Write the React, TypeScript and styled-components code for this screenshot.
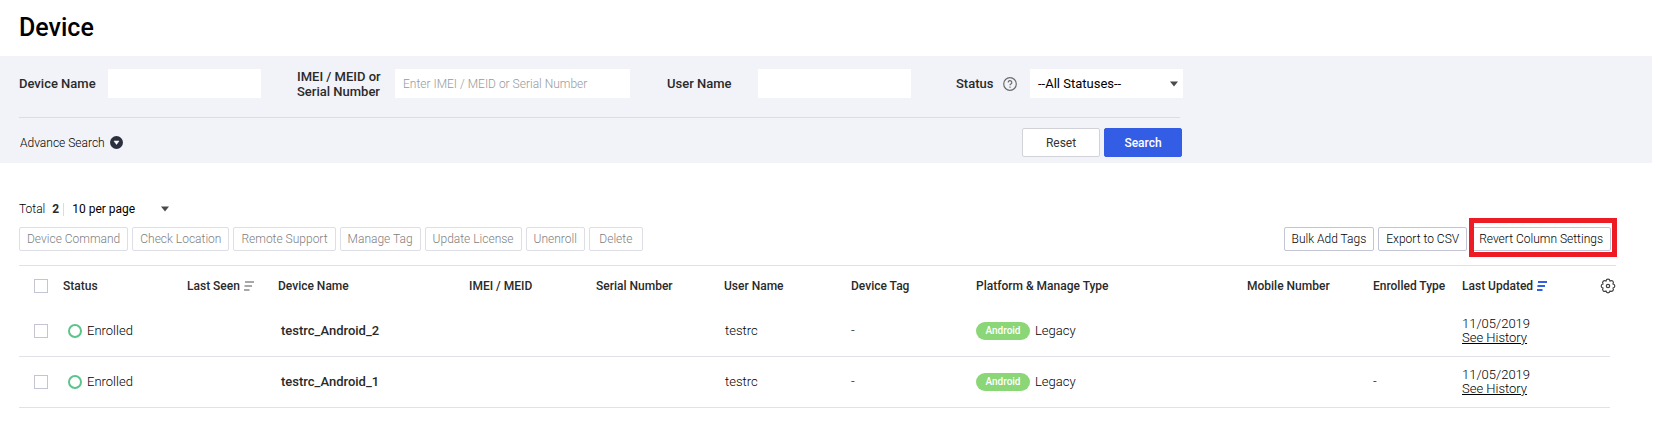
import React from 'react';
import styled, { createGlobalStyle, css } from 'styled-components';

const Global = createGlobalStyle`
  * { box-sizing: border-box; }
  body {
    margin: 0;
    background: #fff;
    color: #000;
    font-family: Roboto, "Liberation Sans", sans-serif;
    font-size: 12px;
    font-weight: 300;
    line-height: 14px;
  }
  button, input, select { font: inherit; color: inherit; margin: 0; }
`;

const Title = styled.h1`
  margin: 0;
  padding: 12px 19px 12px;
  font-size: 25px;
  font-weight: 500;
  line-height: 32px;
`;

const SearchPanel = styled.section`
  margin-right: 7px;
  padding: 13px 19px 6px;
  background: #f2f3f8;
`;

const SearchForm = styled.form`
  max-width: 1164px;
`;

const Fields = styled.div`
  display: grid;
  grid-template-columns: 278fr 370fr 289fr 227fr;
`;

const Divider = styled.hr`
  height: 1px;
  margin: 19px 3px 10px 0;
  border: 0;
  background: #dcdde2;
`;

const Field = styled.div`
  display: flex;
  align-items: center;
  height: 29px;
`;

const FieldLabel = styled.label<{ $width: number }>`
  flex: 0 0 ${(p) => p.$width}px;
  color: #2a2a2a;
  font-size: 13px;
  font-weight: 500;
  line-height: 15px;
`;

const TextBox = styled.input<{ $width: number }>`
  width: ${(p) => p.$width}px;
  height: 29px;
  padding: 0 8px;
  border: 0;
  background: #fff;
  &::placeholder { color: #999; opacity: 1; }
`;

const SelectWrap = styled.span<{ $width: number }>`
  display: grid;
  align-items: center;
  width: ${(p) => p.$width}px;
  > * { grid-area: 1 / 1; }
`;

const Select = styled.select<{ $height: number }>`
  appearance: none;
  width: 100%;
  height: ${(p) => p.$height}px;
  padding: 0 8px;
  border: 0;
  border-radius: 0;
  background: #fff;
  font-weight: 400;
`;

const StatusSelect = styled(Select)`
  font-size: 13px;
`;

const ArrowIcon = styled.svg`
  justify-self: end;
  margin-right: 5px;
  pointer-events: none;
`;

const IconButton = styled.button`
  display: flex;
  padding: 0;
  border: 0;
  background: none;
`;

const FormActions = styled.div`
  display: flex;
  align-items: center;
  gap: 4px;
  padding: 0 1px;
`;

const AdvanceButton = styled.button`
  display: flex;
  align-items: center;
  gap: 5px;
  margin-right: auto;
  padding: 0;
  border: 0;
  background: none;
`;

const ActionButton = styled.button<{ $primary?: boolean }>`
  width: 78px;
  height: 29px;
  padding: 0;
  border: 1px solid #d2d3d8;
  border-radius: 2px;
  background: #fff;
  color: #333;
  font-weight: 400;
  ${(p) =>
    p.$primary &&
    css`
      border-color: #335de4;
      background: #335de4;
      color: #fff;
      font-weight: 500;
    `}
`;

const Listing = styled.main`
  padding: 36px 43px 0 19px;
`;

const Summary = styled.div`
  display: flex;
  align-items: center;
  height: 20px;
`;

const Count = styled.strong`
  margin: 0 4px 0 7px;
  color: #2a2a2a;
  font-weight: 700;
`;

const PageSize = styled.div`
  display: flex;
  align-items: center;
  height: 13px;
  border-left: 1px solid #dcdde2;
`;

const Toolbar = styled.div`
  display: flex;
  gap: 4px;
  padding: 8px 5px 14px 0;
`;

const Spacer = styled.span`
  flex: 1;
`;

const ToolButton = styled.button`
  min-width: 54px;
  height: 24px;
  padding: 0 7px;
  border: 1px solid #c3c4d4;
  border-radius: 2px;
  background: #fff;
  white-space: nowrap;
  &:disabled { border-color: #dedfe6; color: #808080; }
`;

const Highlighted = styled.span`
  position: relative;
  display: flex;
  &::after {
    content: '';
    position: absolute;
    inset: -9px -6px -6px -2px;
    border: 5px solid #ed1c24;
    pointer-events: none;
  }
`;

const Table = styled.table`
  width: 100%;
  table-layout: fixed;
  border-collapse: separate;
  border-spacing: 0;
`;

const HeadCell = styled.th`
  height: 41px;
  padding: 0;
  border-top: 1px solid #e1e2e8;
  color: #2a2a2a;
  font-weight: 500;
  text-align: left;
  white-space: nowrap;
`;

const Cell = styled.td<{ $indent?: number }>`
  height: 51px;
  padding: 0 0 0 ${(p) => p.$indent ?? 0}px;
  border-bottom: 1px solid #e1e2e8;
  font-size: 13px;
  white-space: nowrap;
`;

const EdgeCell = styled.td`
  padding: 0;
`;

const HeadContent = styled.span`
  display: flex;
  align-items: center;
  gap: 4px;
`;

const GearSlot = styled.span`
  display: flex;
  justify-content: flex-end;
`;

const CheckBox = styled.input`
  appearance: none;
  display: block;
  width: 14px;
  height: 14px;
  margin: 0 0 0 15px;
  border: 1px solid #c3c4d4;
  background: #fff;
`;

const Status = styled.span`
  display: flex;
  align-items: center;
  gap: 5px;
`;

const StatusRing = styled.span`
  width: 14px;
  height: 14px;
  border: 2px solid #5bc48c;
  border-radius: 50%;
`;

const DeviceName = styled.span`
  color: #2a2a2a;
  font-weight: 500;
`;

const Platform = styled.span`
  display: flex;
  align-items: center;
  gap: 5px;
`;

const Badge = styled.span`
  width: 54px;
  height: 18px;
  border-radius: 9px;
  background: #8bd676;
  color: #fff;
  font-size: 10px;
  font-weight: 500;
  line-height: 18px;
  text-align: center;
`;

const HistoryLink = styled.a`
  display: block;
  color: inherit;
  text-decoration: underline;
`;

const Arrow = () => (
  <ArrowIcon width="8" height="6" viewBox="0 0 8 6" aria-hidden="true">
    <path d="M0 0.5h8L4 5.5z" fill="#4a4a4a" />
  </ArrowIcon>
);

const SortIcon = ({ color }: { color: string }) => (
  <svg width="10" height="10" viewBox="0 0 10 10" aria-hidden="true">
    <path d="M1 1h9M0.5 5h7.5M0 9h5.5" stroke={color} strokeWidth="1.8" fill="none" />
  </svg>
);

const GearIcon = () => (
  <svg width="16" height="16" viewBox="0 0 16 16" fill="none" stroke="#444" strokeWidth="1.2" strokeLinejoin="round" aria-hidden="true">
    <path d="M6 3.1Q6.2 1.2 8 1.2T10 3.1Q11.6 1.9 12.8 3.2T12.9 6Q14.8 6.2 14.8 8T12.9 10Q14.1 11.6 12.8 12.8T10 12.9Q9.8 14.8 8 14.8T6 12.9Q4.4 14.1 3.2 12.8T3.1 10Q1.2 9.8 1.2 8T3.1 6Q1.9 4.4 3.2 3.2T6 3.1Z" />
    <circle cx="8" cy="8" r="1.7" />
  </svg>
);

const HelpIcon = () => (
  <svg width="14" height="14" viewBox="0 0 14 14" fill="none" stroke="#6b6b6b" strokeWidth="1.2" aria-hidden="true">
    <circle cx="7" cy="7" r="6.3" />
    <path d="M5.2 5.4a1.8 1.8 0 1 1 2.7 1.5c-.6.4-.9.6-.9 1.3M7 9.4v1.3" />
  </svg>
);

const columns: { label: string; width: number; sort?: string }[] = [
  { label: 'Status', width: 124 },
  { label: 'Last Seen', width: 91, sort: '#a8a8a8' },
  { label: 'Device Name', width: 191 },
  { label: 'IMEI / MEID', width: 127 },
  { label: 'Serial Number', width: 128 },
  { label: 'User Name', width: 127 },
  { label: 'Device Tag', width: 125 },
  { label: 'Platform & Manage Type', width: 271 },
  { label: 'Mobile Number', width: 126 },
  { label: 'Enrolled Type', width: 89 },
  { label: 'Last Updated', width: 120, sort: '#335de4' },
];

const devices = [
  { name: 'testrc_Android_2', user: 'testrc', tag: '-', platform: 'Android', type: 'Legacy', enrolled: '', updated: '11/05/2019' },
  { name: 'testrc_Android_1', user: 'testrc', tag: '-', platform: 'Android', type: 'Legacy', enrolled: '-', updated: '11/05/2019' },
];

const bulkActions = ['Device Command', 'Check Location', 'Remote Support', 'Manage Tag', 'Update License', 'Unenroll', 'Delete'];

export default function App() {
  return (
    <>
      <Global />
      <Title>Device</Title>
      <SearchPanel>
        <SearchForm onSubmit={(e) => e.preventDefault()}>
          <Fields>
            <Field>
              <FieldLabel htmlFor="device-name" $width={89}>Device Name</FieldLabel>
              <TextBox id="device-name" $width={153} />
            </Field>
            <Field>
              <FieldLabel htmlFor="imei" $width={98}>
                IMEI / MEID or
                <br />
                Serial Number
              </FieldLabel>
              <TextBox id="imei" $width={235} placeholder="Enter IMEI / MEID or Serial Number" />
            </Field>
            <Field>
              <FieldLabel htmlFor="user-name" $width={91}>User Name</FieldLabel>
              <TextBox id="user-name" $width={153} />
            </Field>
            <Field>
              <FieldLabel htmlFor="status" $width={47}>Status</FieldLabel>
              <IconButton type="button" aria-label="Status help"><HelpIcon /></IconButton>
              <Spacer />
              <SelectWrap $width={153}>
                <StatusSelect id="status" $height={29}>
                  <option>--All Statuses--</option>
                </StatusSelect>
                <Arrow />
              </SelectWrap>
            </Field>
          </Fields>
          <Divider />
          <FormActions>
            <AdvanceButton type="button">
              Advance Search
              <svg width="13" height="13" viewBox="0 0 13 13" aria-hidden="true">
                <circle cx="6.5" cy="6.5" r="6.5" fill="#2b303e" />
                <path d="M4 5h5L6.5 8.5z" fill="#fff" stroke="#fff" strokeWidth="0.5" />
              </svg>
            </AdvanceButton>
            <ActionButton type="reset">Reset</ActionButton>
            <ActionButton type="submit" $primary>Search</ActionButton>
          </FormActions>
        </SearchForm>
      </SearchPanel>
      <Listing>
        <Summary>
          Total <Count>2</Count>
          <PageSize>
            <SelectWrap $width={110}>
              <Select aria-label="Rows per page" $height={20}>
                <option>10 per page</option>
              </Select>
              <Arrow />
            </SelectWrap>
          </PageSize>
        </Summary>
        <Toolbar>
          {bulkActions.map((label) => (
            <ToolButton key={label} type="button" disabled>{label}</ToolButton>
          ))}
          <Spacer />
          <ToolButton type="button">Bulk Add Tags</ToolButton>
          <ToolButton type="button">Export to CSV</ToolButton>
          <Highlighted>
            <ToolButton type="button">Revert Column Settings</ToolButton>
          </Highlighted>
        </Toolbar>
        <Table>
          <colgroup>
            <col style={{ width: 44 }} />
            {columns.map((c) => <col key={c.label} style={{ width: c.width }} />)}
            <col style={{ width: 28 }} />
            <col style={{ width: 6 }} />
          </colgroup>
          <thead>
            <tr>
              <HeadCell><CheckBox type="checkbox" aria-label="Select all devices" /></HeadCell>
              {columns.map((c) => (
                <HeadCell key={c.label} scope="col">
                  <HeadContent>
                    {c.label}
                    {c.sort && <SortIcon color={c.sort} />}
                  </HeadContent>
                </HeadCell>
              ))}
              <HeadCell colSpan={2}>
                <GearSlot>
                  <IconButton type="button" aria-label="Column settings"><GearIcon /></IconButton>
                </GearSlot>
              </HeadCell>
            </tr>
          </thead>
          <tbody>
            {devices.map((d) => (
              <tr key={d.name}>
                <Cell><CheckBox type="checkbox" aria-label={`Select ${d.name}`} /></Cell>
                <Cell $indent={5}><Status><StatusRing />Enrolled</Status></Cell>
                <Cell />
                <Cell $indent={3}><DeviceName>{d.name}</DeviceName></Cell>
                <Cell />
                <Cell />
                <Cell $indent={1}>{d.user}</Cell>
                <Cell>{d.tag}</Cell>
                <Cell><Platform><Badge>{d.platform}</Badge>{d.type}</Platform></Cell>
                <Cell />
                <Cell>{d.enrolled}</Cell>
                <Cell>
                  {d.updated}
                  <HistoryLink href="#history">See History</HistoryLink>
                </Cell>
                <Cell />
                <EdgeCell />
              </tr>
            ))}
          </tbody>
        </Table>
      </Listing>
    </>
  );
}
